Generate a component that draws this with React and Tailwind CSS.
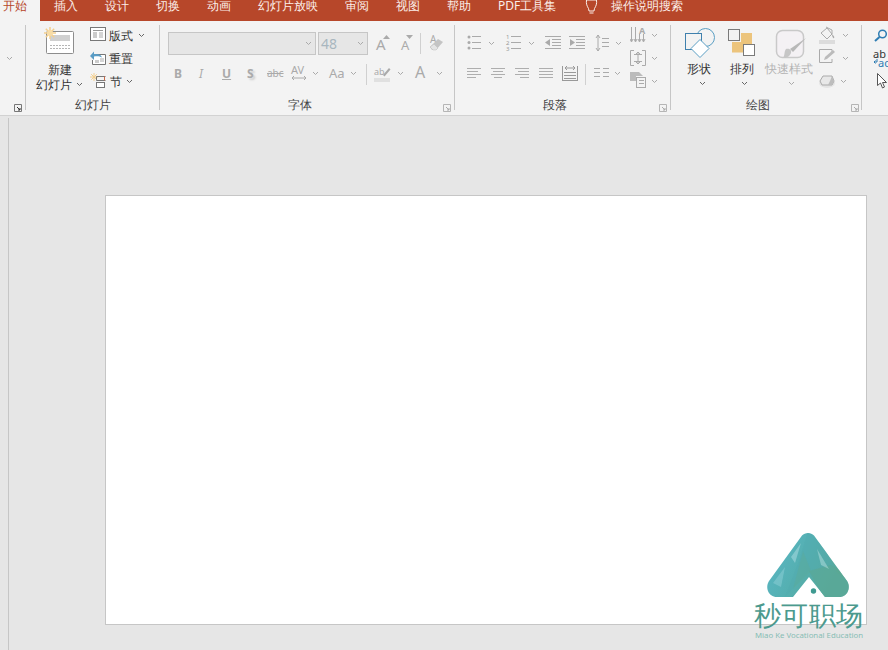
import React from "react";

const CJK = "font-['Microsoft_YaHei','Noto_Sans_CJK_SC','Noto_Sans',sans-serif]";

function Tab({ x, children }) {
  return <span className={`absolute top-[-3px] leading-[17px] text-[12px] text-[#fbeee9] whitespace-nowrap ${x}`}>{children}</span>;
}
function Label({ className, children }) {
  return <span className={`absolute text-[12px] leading-[15px] whitespace-nowrap ${className}`}>{children}</span>;
}
function Sep({ className }) {
  return <div className={`absolute w-px ${className}`} />;
}
function Chev({ className, dark }) {
  return (
    <svg className={`absolute w-[7px] h-[5px] ${className}`} viewBox="0 0 7 5" fill="none">
      <path d="M1 1l2.5 2.5L6 1" stroke={dark ? "#666" : "#aaa"} strokeWidth="1" />
    </svg>
  );
}
function Launcher({ className, dark }) {
  const c = dark ? "#777" : "#b5b5b5";
  return (
    <svg className={`absolute w-[8px] h-[8px] ${className}`} viewBox="0 0 8 8" fill="none">
      <path d="M.5 7.5v-7h7v7z" stroke={c} />
      <path d="M3 3l3 3M6 4v2H4" stroke={dark ? "#333" : "#aaa"} />
    </svg>
  );
}
function Svg({ className, w, h, children }) {
  return (
    <svg className={`absolute ${className}`} viewBox={`0 0 ${w} ${h}`} fill="none">
      {children}
    </svg>
  );
}
function Lines({ className, rows }) {
  return (
    <Svg className={className} w={15} h={14}>
      {rows.map((r, i) => (
        <path key={i} d={`M${r[0]} ${r[2]}.5H${r[1]}`} stroke="#aeaeae" />
      ))}
    </Svg>
  );
}

const LOGO = "M37 4.500c3-3.500 9-3.500 12 0L82 50c4 6 1 16-8 16H60L44 46 28 66H12C3 66 0 56 4 50z";

export default function App() {
  return (
    <div className={`relative w-[888px] h-[650px] overflow-hidden bg-[#e6e6e6] ${CJK}`}>
      {/* Tab strip */}
      <div className="absolute left-0 top-0 w-[888px] h-[21px] bg-[#b7472a]" />
      <div className="absolute left-0 top-0 w-[40px] h-[21px] bg-[#f3f3f3]" />
      <span className="absolute left-[3px] top-[-3px] leading-[17px] text-[12px] text-[#b7472a]">开始</span>
      <Tab x="left-[54px]">插入</Tab>
      <Tab x="left-[105px]">设计</Tab>
      <Tab x="left-[156px]">切换</Tab>
      <Tab x="left-[207px]">动画</Tab>
      <Tab x="left-[258px]">幻灯片放映</Tab>
      <Tab x="left-[345px]">审阅</Tab>
      <Tab x="left-[396px]">视图</Tab>
      <Tab x="left-[447px]">帮助</Tab>
      <Tab x="left-[498px]">PDF工具集</Tab>
      <Tab x="left-[611px]">操作说明搜索</Tab>
      <Svg className="left-[584px] top-0 w-[15px] h-[15px]" w={15} h={15}>
        <path d="M4.5 8.5C3 6 2 4 2.500 0h10c.5 4-.5 6-2 8.500l-.5 2.500H5z" stroke="#fbeee9" />
        <path d="M5.500 13h4" stroke="#fbeee9" />
      </Svg>

      {/* Ribbon */}
      <div className="absolute left-0 top-[21px] w-[888px] h-[95px] bg-[#f3f3f3] border-b border-[#d2d2d2]" />
      <Sep className="left-[25px] top-[25px] h-[85px] bg-[#c6c6c6]" />
      <Sep className="left-[159px] top-[25px] h-[85px] bg-[#c6c6c6]" />
      <Sep className="left-[454px] top-[25px] h-[85px] bg-[#c6c6c6]" />
      <Sep className="left-[670px] top-[25px] h-[85px] bg-[#c6c6c6]" />
      <Sep className="left-[861px] top-[25px] h-[85px] bg-[#c6c6c6]" />
      <Sep className="left-[420px] top-[33px] h-[21px] bg-[#d0d0d0]" />
      <Sep className="left-[366px] top-[64px] h-[21px] bg-[#d0d0d0]" />
      <Sep className="left-[585px] top-[64px] h-[21px] bg-[#d0d0d0]" />

      <Chev className="left-[6px] top-[56px]" />

      {/* Slides group */}
      <Svg className="left-[43px] top-[26px] w-[32px] h-[29px]" w={32} h={29}>
        <rect x="3.500" y="5.500" width="27" height="22" rx="1" fill="#fff" stroke="#8d8d8d" />
        <rect x="7" y="9" width="20" height="6" fill="#d0d0d0" />
        <path d="M7 19.500h20M7 22.500h20" stroke="#b5b5b5" strokeDasharray="2 1" />
        <g stroke="#f3cf8e" strokeWidth="1.500">
          <path d="M7 1v12M1 7h12M2.800 2.800l8.400 8.400M11.200 2.800l-8.400 8.400" />
        </g>
        <circle cx="7" cy="7" r="3" fill="#f7dca6" />
      </Svg>
      <Label className="left-[48px] top-[62px] text-[#333]">新建</Label>
      <Label className="left-[36px] top-[77px] text-[#333]">幻灯片</Label>
      <Chev className="left-[76px] top-[82px]" dark />

      <Svg className="left-[90px] top-[27px] w-[16px] h-[15px]" w={16} h={15}>
        <rect x=".5" y=".5" width="15" height="13" fill="#fff" stroke="#777" />
        <path d="M3 3.500h10" stroke="#999" />
        <rect x="3" y="5" width="4" height="6" fill="#ccc" />
        <path d="M9 6h4M9 8h4M9 10h4" stroke="#aaa" />
      </Svg>
      <Label className="left-[109px] top-[28px] text-[#333]">版式</Label>
      <Chev className="left-[138px] top-[33px]" dark />

      <Svg className="left-[90px] top-[51px] w-[16px] h-[15px]" w={16} h={15}>
        <path d="M5 3.500h10.500v10H2.500V9" fill="#fff" stroke="#777" />
        <rect x="5" y="9" width="4" height="3" fill="#ccc" />
        <path d="M10 8h4M10 10h4" stroke="#aaa" />
        <path d="M0 5l4-4.500V3c5-.5 7 .5 8 3.500-2.500-1.500-5-1.500-8-1V9z" fill="#5a9cc5" />
      </Svg>
      <Label className="left-[109px] top-[51px] text-[#333]">重置</Label>

      <Svg className="left-[90px] top-[73px] w-[16px] h-[16px]" w={16} h={16}>
        <path d="M4 0v8M0 4h8M1.200 1.200l5.600 5.600M6.800 1.200L1.200 6.800" stroke="#f3cf8e" />
        <path d="M6.500 3.500h9M6.500 7.500h9" stroke="#777" />
        <rect x="6.500" y="9.500" width="8" height="5" fill="#fff" stroke="#777" />
        <path d="M6.500 3.500v4" stroke="#777" />
        <path d="M14.500 3.500v4" stroke="#c96a4a" />
      </Svg>
      <Label className="left-[110px] top-[74px] text-[#333]">节</Label>
      <Chev className="left-[126px] top-[79px]" dark />
      <Label className="left-[75px] top-[97px] text-[#444]">幻灯片</Label>
      <Launcher className="left-[14px] top-[104px]" dark />

      {/* Font group */}
      <div className="absolute left-[168px] top-[32px] w-[148px] h-[23px] bg-[#e6e6e6] border border-[#c6c6c6]" />
      <Chev className="left-[305px] top-[41px]" />
      <div className="absolute left-[318px] top-[32px] w-[50px] h-[23px] bg-[#e6e6e6] border border-[#c6c6c6]" />
      <span className="absolute left-[321px] top-[35px] text-[14px] leading-[17px] text-[#a8b6bf] font-['Liberation_Sans',sans-serif]">48</span>
      <Chev className="left-[357px] top-[41px]" />

      <span className="absolute left-[376px] top-[35px] text-[15px] leading-[18px] text-[#aaa] font-['Liberation_Sans',sans-serif]">A</span>
      <Svg className="left-[383px] top-[35px] w-[7px] h-[4px]" w={7} h={4}><path d="M0 4l3.500-4L7 4z" fill="#aaa" /></Svg>
      <span className="absolute left-[401px] top-[37px] text-[13px] leading-[16px] text-[#aaa] font-['Liberation_Sans',sans-serif]">A</span>
      <Svg className="left-[406px] top-[35px] w-[7px] h-[4px]" w={7} h={4}><path d="M0 0l3.500 4L7 0z" fill="#aaa" /></Svg>
      <span className="absolute left-[430px] top-[33px] text-[10px] leading-[12px] text-[#aaa] font-['Liberation_Sans',sans-serif]">A</span>
      <Svg className="left-[429px] top-[37px] w-[16px] h-[14px]" w={16} h={14}>
        <path d="M1 10l8-8 5 3-7 8H3z" fill="#c4c4c4" />
        <path d="M1 10l3 3h3l2-2-4-4z" fill="#e4e4e4" stroke="#bdbdbd" strokeWidth=".5" />
      </Svg>

      <span className="absolute left-[174px] top-[66px] text-[12px] leading-[15px] font-bold text-[#aaa] font-['Liberation_Sans',sans-serif]">B</span>
      <span className="absolute left-[199px] top-[66px] text-[12px] leading-[15px] italic text-[#aaa] font-['Liberation_Serif',serif]">I</span>
      <span className="absolute left-[222px] top-[66px] text-[12px] leading-[15px] font-bold underline text-[#aaa] font-['Liberation_Sans',sans-serif]">U</span>
      <span className="absolute left-[247px] top-[66px] text-[12px] leading-[15px] font-bold text-[#aaa] [text-shadow:2px_2px_2px_#ccc] font-['Liberation_Sans',sans-serif]">S</span>
      <span className="absolute left-[267px] top-[67px] text-[10px] leading-[13px] text-[#aaa] line-through font-['Liberation_Sans',sans-serif]">abc</span>
      <span className="absolute left-[291px] top-[63px] text-[11px] leading-[13px] text-[#aaa] font-['Liberation_Sans',sans-serif]">AV</span>
      <Svg className="left-[291px] top-[75px] w-[16px] h-[6px]" w={16} h={6}>
        <path d="M1 3h14M3 1L1 3l2 2M13 1l2 2-2 2" stroke="#aaa" />
      </Svg>
      <Chev className="left-[312px] top-[71px]" />
      <span className="absolute left-[329px] top-[65px] text-[13px] leading-[16px] text-[#aaa] font-['Liberation_Sans',sans-serif]">Aa</span>
      <Chev className="left-[350px] top-[71px]" />
      <span className="absolute left-[374px] top-[66px] text-[9px] leading-[11px] text-[#aaa] font-['Liberation_Sans',sans-serif]">ab</span>
      <Svg className="left-[374px] top-[66px] w-[17px] h-[16px]" w={17} h={16}>
        <path d="M9 9l6-7 1.500 1.500-6 7z" fill="#aaa" />
        <rect x="0" y="12" width="16" height="4" fill="#e0e0e0" />
      </Svg>
      <Chev className="left-[397px] top-[71px]" />
      <span className="absolute left-[415px] top-[63px] text-[16px] leading-[19px] text-[#aaa] font-['Liberation_Sans',sans-serif]">A</span>
      <Chev className="left-[436px] top-[71px]" />
      <Label className="left-[288px] top-[97px] text-[#444]">字体</Label>
      <Launcher className="left-[443px] top-[104px]" />

      {/* Paragraph group */}
      <Svg className="left-[467px] top-[35px] w-[14px] h-[15px]" w={14} h={15}>
        <g fill="#aaa"><circle cx="2" cy="2" r="1.500" /><circle cx="2" cy="7.500" r="1.500" /><circle cx="2" cy="13" r="1.500" /></g>
        <path d="M5 1.500h9M5 7.500h9M5 13.500h9" stroke="#aaa" />
      </Svg>
      <Chev className="left-[488px] top-[41px]" />
      <span className="absolute left-[506px] top-[34px] w-[4px] text-[6px] leading-[6px] text-[#999] font-['Liberation_Sans',sans-serif]">1<br />2<br />3</span>
      <Svg className="left-[510px] top-[35px] w-[11px] h-[15px]" w={11} h={15}>
        <path d="M1 1.500h10M1 7.500h10M1 13.500h10" stroke="#aaa" />
      </Svg>
      <Chev className="left-[528px] top-[41px]" />
      <Svg className="left-[545px] top-[35px] w-[16px] h-[15px]" w={16} h={15}>
        <path d="M0 1.500h16M7 4.500h9M7 7.500h9M7 10.500h9M0 13.500h16" stroke="#aaa" />
        <path d="M0 7.500l5-3.500v7z" fill="#aaa" />
      </Svg>
      <Svg className="left-[569px] top-[35px] w-[16px] h-[15px]" w={16} h={15}>
        <path d="M0 1.500h16M7 4.500h9M7 7.500h9M7 10.500h9M0 13.500h16" stroke="#aaa" />
        <path d="M6 7.500l-5-3.500v7z" fill="#aaa" />
      </Svg>
      <Svg className="left-[595px] top-[34px] w-[14px] h-[18px]" w={14} h={18}>
        <path d="M3 1v16M1 4l2-3 2 3M1 14l2 3 2-3" stroke="#aaa" />
        <path d="M7 4.500h7M7 8.500h7M7 12.500h7" stroke="#aaa" />
      </Svg>
      <Chev className="left-[615px] top-[41px]" />
      <Svg className="left-[630px] top-[27px] w-[16px] h-[17px]" w={16} h={17}>
        <path d="M1.500 0v14M5.500 0v14M9.500 7v7M13.500 7v7" stroke="#aaa" />
        <path d="M0 12l1.500 3L3 12M4 12l1.500 3L7 12M8 12l1.500 3L11 12M12 12l1.500 3 1.500-3" stroke="#aaa" />
      </Svg>
      <span className="absolute left-[639px] top-[25px] text-[9px] leading-[11px] font-bold text-[#aaa] font-['Liberation_Sans',sans-serif]">A</span>
      <Chev className="left-[651px] top-[33px]" />
      <Svg className="left-[630px] top-[50px] w-[16px] h-[16px]" w={16} h={16}>
        <path d="M4 .5H.5v15H4M12 .5h3.500v15H12" stroke="#aaa" />
        <path d="M4 4.500h8M4 11.500h8M8 2v12M6 4l2-2 2 2M6 12l2 2 2-2" stroke="#aaa" />
      </Svg>
      <Chev className="left-[651px] top-[56px]" />

      <Lines className="left-[467px] top-[67px] w-[15px] h-[14px]" rows={[[0,14,1],[0,11,4],[0,14,7],[0,9,10]]} />
      <Lines className="left-[491px] top-[67px] w-[15px] h-[14px]" rows={[[0,14,1],[2,12,4],[0,14,7],[3,11,10]]} />
      <Lines className="left-[515px] top-[67px] w-[15px] h-[14px]" rows={[[0,14,1],[3,14,4],[0,14,7],[5,14,10]]} />
      <Lines className="left-[539px] top-[67px] w-[15px] h-[14px]" rows={[[0,14,1],[0,14,4],[0,14,7],[0,14,10]]} />
      <Svg className="left-[562px] top-[65px] w-[16px] h-[17px]" w={16} h={17}>
        <path d="M.5 1v15M15.500 1v15" stroke="#999" />
        <path d="M3 3h10M5 1L3 3l2 2M11 1l2 2-2 2" stroke="#999" />
        <path d="M2 7.500h12M2 10.500h12M2 13.500h12M.5 15.500h15" stroke="#999" />
      </Svg>
      <Svg className="left-[594px] top-[67px] w-[15px] h-[14px]" w={15} h={14}>
        <path d="M0 1.500h6M0 5.500h6M0 9.500h6M9 1.500h6M9 5.500h6M9 9.500h6" stroke="#aaa" />
      </Svg>
      <Chev className="left-[614px] top-[71px]" />
      <Svg className="left-[630px] top-[72px] w-[16px] h-[16px]" w={16} h={16}>
        <path d="M0 0h9l4 4H6v5H0z" fill="#bbb" />
        <rect x="6.500" y="5.500" width="9" height="10" fill="#f3f3f3" stroke="#aaa" />
        <path d="M9 8.500h5M9 11.500h5" stroke="#aaa" />
      </Svg>
      <Chev className="left-[651px] top-[79px]" />
      <Label className="left-[543px] top-[97px] text-[#444]">段落</Label>
      <Launcher className="left-[659px] top-[104px]" />

      {/* Drawing group */}
      <Svg className="left-[684px] top-[27px] w-[32px] h-[32px]" w={32} h={32}>
        <circle cx="21.500" cy="10.500" r="9" fill="#f3f3f3" stroke="#5b9fc4" />
        <rect x="1.500" y="6.500" width="16" height="16" fill="#f3f3f3" stroke="#3f80ad" />
        <path d="M16 12.500l9 9-9 9-9-9z" fill="#fff" stroke="#5b9fc4" />
      </Svg>
      <Label className="left-[687px] top-[61px] text-[#333]">形状</Label>
      <Chev className="left-[699px] top-[81px]" dark />

      <Svg className="left-[727px] top-[28px] w-[29px] h-[29px]" w={29} h={29}>
        <rect x="14" y="5" width="11" height="12" fill="#ecc47c" />
        <rect x="5" y="14" width="13" height="10.500" fill="#ecc47c" />
        <rect x="1.500" y="1.500" width="11" height="11" fill="#f3f3f3" stroke="#7a7a7a" />
        <rect x="16.500" y="16.500" width="11" height="11" fill="#fff" stroke="#7a7a7a" />
      </Svg>
      <Label className="left-[730px] top-[61px] text-[#333]">排列</Label>
      <Chev className="left-[741px] top-[81px]" dark />

      <Svg className="left-[775px] top-[29px] w-[31px] h-[30px]" w={31} h={30}>
        <rect x="1.500" y="1.500" width="27" height="27" rx="6" fill="#f4f1f4" stroke="#c9c9c9" strokeWidth="1.500" />
        <path d="M31 9L18 23l-3-3z" fill="#b8b8b8" />
        <path d="M11 20c3-1 6 1 5 4s-4 5-8 5c2-2 1-7 3-9z" fill="#c6c6c6" />
      </Svg>
      <Label className="left-[765px] top-[61px] text-[#b4b4b4]">快速样式</Label>
      <Chev className="left-[788px] top-[81px]" />

      <Svg className="left-[819px] top-[26px] w-[17px] h-[18px]" w={17} h={18}>
        <path d="M2 7l6-5 5 6-5 5z" fill="#f3f3f3" stroke="#aaa" />
        <path d="M7 1l6 3v4" stroke="#aaa" />
        <path d="M13 8c1 1 3 3 2 4s-2-2-2-4z" fill="#aaa" />
        <rect x="0" y="14" width="16" height="4" fill="#dcdcdc" />
      </Svg>
      <Chev className="left-[842px] top-[33px]" />
      <Svg className="left-[819px] top-[49px] w-[17px] h-[15px]" w={17} h={15}>
        <path d="M13 4.500V.5H.5v13H13V10" stroke="#aaa" />
        <path d="M5 11l1-3 8-7 2 2-8 7z" fill="#bbb" />
      </Svg>
      <Chev className="left-[842px] top-[56px]" />
      <Svg className="left-[819px] top-[74px] w-[17px] h-[15px]" w={17} h={15}>
        <ellipse cx="8" cy="9" rx="8" ry="5" fill="#e4e4e4" />
        <path d="M4 2h9l2 5-2 4H3L1 7z" fill="#e8e8e8" stroke="#aaa" />
        <path d="M13 2l2 5-2 4H9l2-4z" fill="#bdbdbd" />
      </Svg>
      <Chev className="left-[840px] top-[79px]" />
      <Label className="left-[746px] top-[97px] text-[#444]">绘图</Label>
      <Launcher className="left-[851px] top-[104px]" />

      {/* Editing group */}
      <Svg className="left-[874px] top-[29px] w-[14px] h-[13px]" w={14} h={13}>
        <circle cx="8.500" cy="5" r="3.800" stroke="#2f7db3" strokeWidth="1.500" />
        <path d="M5.500 8L1 12" stroke="#2f7db3" strokeWidth="2" />
      </Svg>
      <span className="absolute left-[873px] top-[49px] text-[11px] leading-[10px] text-[#333] font-['Liberation_Sans',sans-serif]">ab</span>
      <span className="absolute left-[878px] top-[58px] text-[11px] leading-[10px] text-[#2f7db3] font-['Liberation_Sans',sans-serif]">ac</span>
      <Svg className="left-[873px] top-[59px] w-[5px] h-[6px]" w={5} h={6}>
        <path d="M4 0v3H1M2.500 1.500L1 3l1.500 1.500" stroke="#2f7db3" />
      </Svg>
      <Svg className="left-[877px] top-[73px] w-[11px] h-[16px]" w={11} h={16}>
        <path d="M.5.5v12l3-2.500 2 5 2-1-2-4.500h4z" fill="#fff" stroke="#555" />
      </Svg>

      {/* Canvas */}
      <Sep className="left-[8px] top-[118px] h-[532px] bg-[#c6c6c6]" />
      <div className="absolute left-[105px] top-[195px] w-[762px] h-[430px] bg-white border border-[#c6c6c6]" />

      {/* Logo */}
      <svg className="absolute left-[765px] top-[531px] w-[86px] h-[68px]" viewBox="0 0 86 68">
        <defs>
          <linearGradient id="lg" x1="0" y1="0" x2="1" y2="0.4">
            <stop offset="0" stopColor="#5bb8c9" />
            <stop offset=".5" stopColor="#55b0b2" />
            <stop offset="1" stopColor="#58a899" />
          </linearGradient>
          <clipPath id="lc">
            <path d={LOGO} />
          </clipPath>
        </defs>
        <path d={LOGO} fill="url(#lg)" />
        <g clipPath="url(#lc)">
          <path d="M43 0L60 18 72 42 86 50V68H60L44 40 20 66 34 30z" fill="#4fa9ae" opacity=".4" />
          <path d="M44 40L60 68H86V46L66 34z" fill="#5ca78f" opacity=".55" />
          <path d="M26 26L36 12 30 32z" fill="#a9dbe0" opacity=".55" />
          <path d="M52 18L64 38 56 34z" fill="#b5dfe0" opacity=".5" />
          <path d="M8 52L20 36 16 56z" fill="#9dd6de" opacity=".4" />
          <path d="M28 58L38 20 46 40z" fill="#5dab9a" opacity=".45" />
        </g>
        <circle cx="48.500" cy="60" r="2.700" fill="#3f9a91" />
      </svg>
      <span className="absolute left-[754px] top-[597px] text-[27px] leading-[36px] tracking-[0.3px] text-[#4c9a8e] font-['Noto_Sans_CJK_SC',sans-serif] whitespace-nowrap">秒可职场</span>
      <span className="absolute left-[755px] top-[630px] text-[7.800px] leading-[10px] text-[#86bdb5] font-['Liberation_Sans',sans-serif] whitespace-nowrap">Miao Ke Vocational Education</span>
    </div>
  );
}
